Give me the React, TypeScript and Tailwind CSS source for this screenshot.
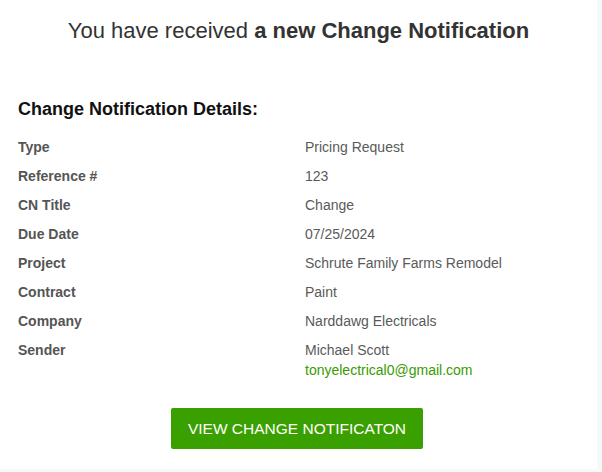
import React from "react";

const rows: [string, string][] = [
  ["Type", "Pricing Request"],
  ["Reference #", "123"],
  ["CN Title", "Change"],
  ["Due Date", "07/25/2024"],
  ["Project", "Schrute Family Farms Remodel"],
  ["Contract", "Paint"],
  ["Company", "Narddawg Electricals"],
];

export default function App() {
  return (
    <div
      className="w-[602px] h-[472px] bg-[#f7f8fa] overflow-hidden"
      style={{ fontFamily: '"Liberation Sans", Arial, sans-serif' }}
    >
      <div className="w-[597px] h-[469px] bg-white flex flex-col">
        <h1 className="pt-[18px] text-center text-[22px] leading-[26px] text-[#333333] font-normal">
          You have received <span className="font-bold">a new Change Notification</span>
        </h1>
        <h2 className="mt-[55px] px-[18px] text-[18px] leading-[21px] font-bold text-[#111111]">
          Change Notification Details:
        </h2>
        <div className="mt-[13px] px-[18px] grid grid-cols-[287px_1fr] text-[14px] leading-[17px]">
          {rows.map(([k, v]) => (
            <React.Fragment key={k}>
              <div className="py-[6px] font-bold text-[#555555]">{k}</div>
              <div className="py-[6px] text-[#5a5a5a]">{v}</div>
            </React.Fragment>
          ))}
          <div className="py-[6px] font-bold text-[#555555]">Sender</div>
          <div className="py-[6px] text-[#5a5a5a]">
            <div>Michael Scott</div>
            <div className="mt-[3px] text-[#3a9a00]">tonyelectrical0@gmail.com</div>
          </div>
        </div>
        <div className="mt-[23px] flex justify-center pr-[3px]">
          <a
            href="#"
            className="inline-block bg-[#3aa000] text-white text-[15.5px] leading-[17px] py-[12px] rounded-[2px] w-[252px] text-center"
          >
            VIEW CHANGE NOTIFICATON
          </a>
        </div>
      </div>
    </div>
  );
}
